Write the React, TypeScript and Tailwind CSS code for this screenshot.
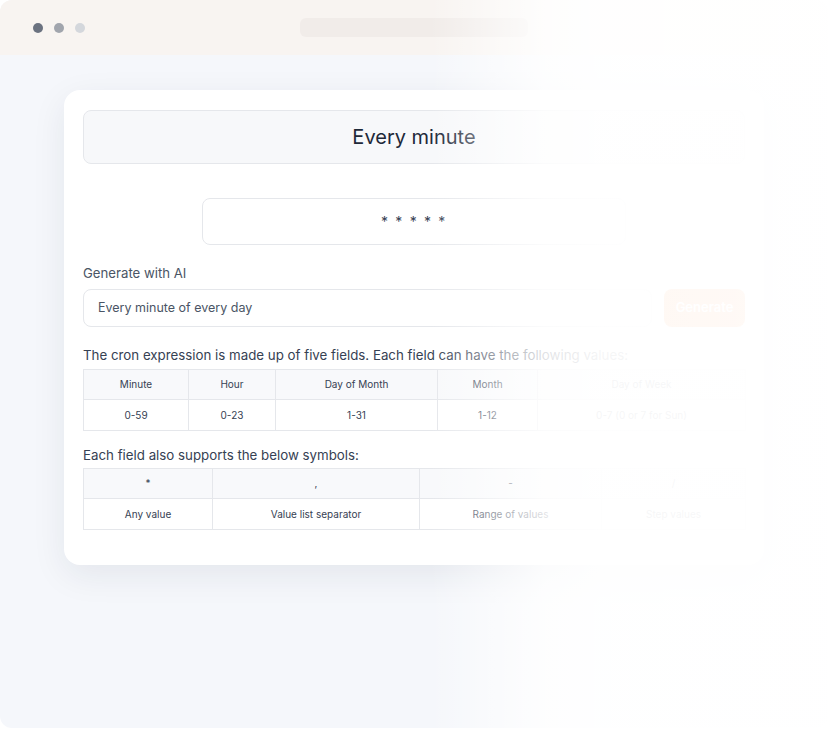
import React from "react";

const fields = [
  { name: "Minute", value: "0-59", w: "w-[105px]" },
  { name: "Hour", value: "0-23", w: "w-[87px]" },
  { name: "Day of Month", value: "1-31", w: "w-[162px]" },
  { name: "Month", value: "1-12", w: "w-[100px]" },
  { name: "Day of Week", value: "0-7 (0 or 7 for Sun)", w: "w-[208px]" },
];

const symbols = [
  { sym: "*", label: "Any value", w: "w-[129px]" },
  { sym: ",", label: "Value list separator", w: "w-[207px]" },
  { sym: "-", label: "Range of values", w: "w-[182px]" },
  { sym: "/", label: "Step values", w: "w-[144px]" },
];

function RefTable({ rows }: { rows: { head: string; body: string; w: string }[] }) {
  return (
    <table className="w-full table-fixed border-collapse text-[10px] text-gray-700">
      <thead>
        <tr>
          {rows.map((r) => (
            <th key={r.head} className={`${r.w} h-[30px] border border-[#e5e7eb] bg-[#f8f9fb] font-normal`}>
              {r.head}
            </th>
          ))}
        </tr>
      </thead>
      <tbody>
        <tr>
          {rows.map((r) => (
            <td key={r.head} className="h-[31px] border border-[#e5e7eb] text-center">
              {r.body}
            </td>
          ))}
        </tr>
      </tbody>
    </table>
  );
}

export default function App() {
  return (
    <div className="relative w-[828px] h-[730px] overflow-hidden bg-white font-['Inter',sans-serif]">
      {/* browser frame */}
      <div className="h-[728px] rounded-xl overflow-hidden bg-[#f5f7fb] flex flex-col">
        <div className="h-[55px] shrink-0 bg-[#f8f4f1] flex items-center px-[33px]">
          <div className="flex gap-[11px]">
            <span className="w-[10px] h-[10px] rounded-full bg-[#6b7280]" />
            <span className="w-[10px] h-[10px] rounded-full bg-[#a1a5ad]" />
            <span className="w-[10px] h-[10px] rounded-full bg-[#d4d7dc]" />
          </div>
          <div className="ml-[215px] h-[19px] w-[228px] rounded-md bg-[#f1ece9]" />
        </div>

        <div className="pt-[35px] pl-[64px]">
          <div className="w-[700px] rounded-2xl bg-white px-[19px] pt-[20px] pb-[35px] shadow-[0_10px_34px_rgba(30,41,59,0.08)]">
            <div className="h-[54px] rounded-lg border border-[#e5e7eb] bg-[#f7f8fa] flex items-center justify-center text-[20px] text-gray-800">
              Every minute
            </div>

            <div className="mt-[34px] mx-auto w-[424px] h-[47px] rounded-lg border border-[#e5e7eb] flex items-center justify-center text-[14px] tracking-[0.12em] text-gray-700">
              * * * * *
            </div>

            <div className="mt-[18px] text-[13.2px] leading-5 text-gray-600">Generate with AI</div>
            <div className="mt-[6px] flex gap-[12px]">
              <div className="flex-1 h-[38px] rounded-lg border border-[#e5e7eb] flex items-center px-[14px] text-[12.5px] text-gray-600">
                Every minute of every day
              </div>
              <button className="w-[81px] h-[38px] rounded-lg bg-[#f97316] text-white text-[13px] font-semibold">
                Generate
              </button>
            </div>

            <p className="mt-[18px] text-[13.3px] leading-5 text-gray-700">
              The cron expression is made up of five fields. Each field can have the following values:
            </p>
            <div className="mt-[4px]">
              <RefTable rows={fields.map((f) => ({ head: f.name, body: f.value, w: f.w }))} />
            </div>

            <p className="mt-[14px] text-[13.3px] leading-5 text-gray-700">
              Each field also supports the below symbols:
            </p>
            <div className="mt-[3px]">
              <RefTable rows={symbols.map((s) => ({ head: s.sym, body: s.label, w: s.w }))} />
            </div>
          </div>
        </div>
      </div>

      {/* fade out to the right */}
      <div className="pointer-events-none absolute inset-y-0 left-[430px] right-0 bg-[linear-gradient(to_right,rgba(255,255,255,0)_0px,rgba(255,255,255,0.5)_65px,rgba(255,255,255,0.85)_115px,rgba(255,255,255,0.95)_170px,rgba(255,255,255,0.97)_100%)]" />
    </div>
  );
}
